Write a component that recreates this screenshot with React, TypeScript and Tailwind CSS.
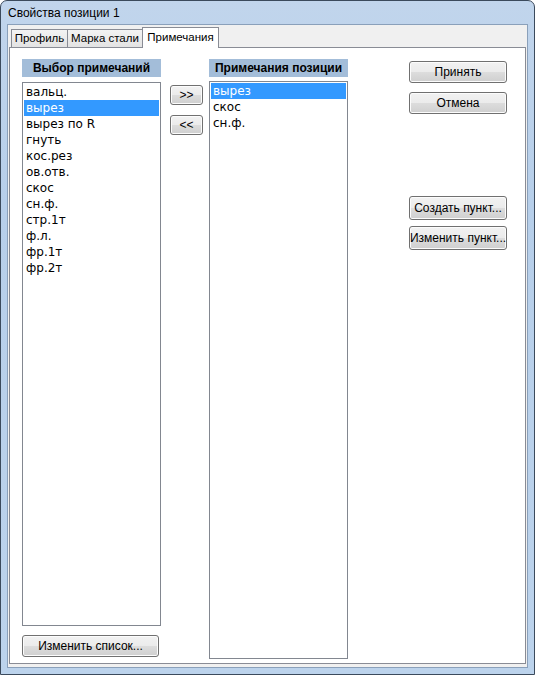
import React from "react";

const btn =
  "flex items-center justify-center border border-[#707070] rounded-[3px] bg-[linear-gradient(#f2f2f2_0%,#ebebeb_50%,#dddddd_50%,#cfcfcf_100%)] text-[12px] text-black shadow-[inset_0_0_0_1px_#fcfcfc] whitespace-nowrap";

const leftItems = ["вальц.", "вырез", "вырез по R", "гнуть", "кос.рез", "ов.отв.", "скос", "сн.ф.", "стр.1т", "ф.л.", "фр.1т", "фр.2т"];
const rightItems = ["вырез", "скос", "сн.ф."];

function ListBox({ items, selected, h }: { items: string[]; selected: number; h: string }) {
  return (
    <div className={`border border-[#828790] bg-white p-px ${h}`} style={{ fontFamily: '"DejaVu Sans", sans-serif' }}>
      {items.map((t, i) => (
        <div
          key={t}
          className={`h-[16px] leading-[16px] text-[12px] pl-[2px] ${i === selected ? "bg-[#3399ff] text-white" : "text-black"}`}
        >
          {t}
        </div>
      ))}
    </div>
  );
}

function Header({ text }: { text: string }) {
  return (
    <div
      className="h-[18px] bg-[#a3bdd9] flex items-center justify-center text-[12px] font-bold text-black"
      style={{ fontFamily: '"Liberation Sans", sans-serif' }}
    >
      {text}
    </div>
  );
}

export default function App() {
  return (
    <div
      className="w-[535px] h-[675px] border border-[#3b4a5c] rounded-t-[7px] bg-[linear-gradient(180deg,#c1d5ec_0%,#b7cfea_30%,#bcd3ec_100%)] flex flex-col overflow-hidden"
      style={{ fontFamily: '"Liberation Sans", sans-serif' }}
    >
      <div className="h-[23px] flex items-center pl-[7px] text-[12px] text-black shrink-0">Свойства позиции 1</div>
      <div className="mx-[6px] mb-[6px] flex-1 border border-[#8aa0ba] bg-[#f0f0f0] flex flex-col px-[1px] pt-[1px] pb-[3px]">
        <div className="flex items-end h-[21px] pl-[2px] shrink-0 whitespace-nowrap">
          <div className="h-[18px] flex items-center justify-center border border-[#898c95] border-b-0 bg-[linear-gradient(#f3f3f3,#e3e3e3)] text-[11.5px] w-[57px]">Профиль</div>
          <div className="h-[18px] flex items-center justify-center border border-[#898c95] border-b-0 border-l-0 bg-[linear-gradient(#f3f3f3,#e3e3e3)] text-[11.5px] w-[75px]">Марка стали</div>
          <div className="h-[21px] flex items-center justify-center border border-[#898c95] border-b-0 bg-white text-[11.5px] w-[77px] -ml-px relative top-px z-10">Примечания</div>
        </div>
        <div className="flex-1 border border-[#898c95] bg-white flex pl-[12px] pt-[11px]">
          <div className="w-[139px] flex flex-col">
            <Header text="Выбор примечаний" />
            <div className="h-[5px]" />
            <ListBox items={leftItems} selected={1} h="h-[544px]" />
            <div className="h-[9px]" />
            <div className={`${btn} w-[137px] h-[22px]`}>Изменить список...</div>
          </div>
          <div className="w-[33px] ml-[9px] flex flex-col gap-[10px] pt-[26px]">
            <div className={`${btn} h-[20px] text-[11px]`}>&gt;&gt;</div>
            <div className={`${btn} h-[20px] text-[11px]`}>&lt;&lt;</div>
          </div>
          <div className="w-[139px] ml-[6px] flex flex-col">
            <Header text="Примечания позиции" />
            <div className="h-[4px]" />
            <ListBox items={rightItems} selected={0} h="h-[578px]" />
          </div>
          <div className="w-[98px] ml-[61px] flex flex-col pt-[2px]">
            <div className={`${btn} h-[22px]`}>Принять</div>
            <div className={`${btn} h-[22px] mt-[9px]`}>Отмена</div>
            <div className={`${btn} h-[24px] mt-[82px]`}>Создать пункт...</div>
            <div className={`${btn} h-[24px] mt-[6px]`}>Изменить пункт...</div>
          </div>
        </div>
      </div>
    </div>
  );
}
